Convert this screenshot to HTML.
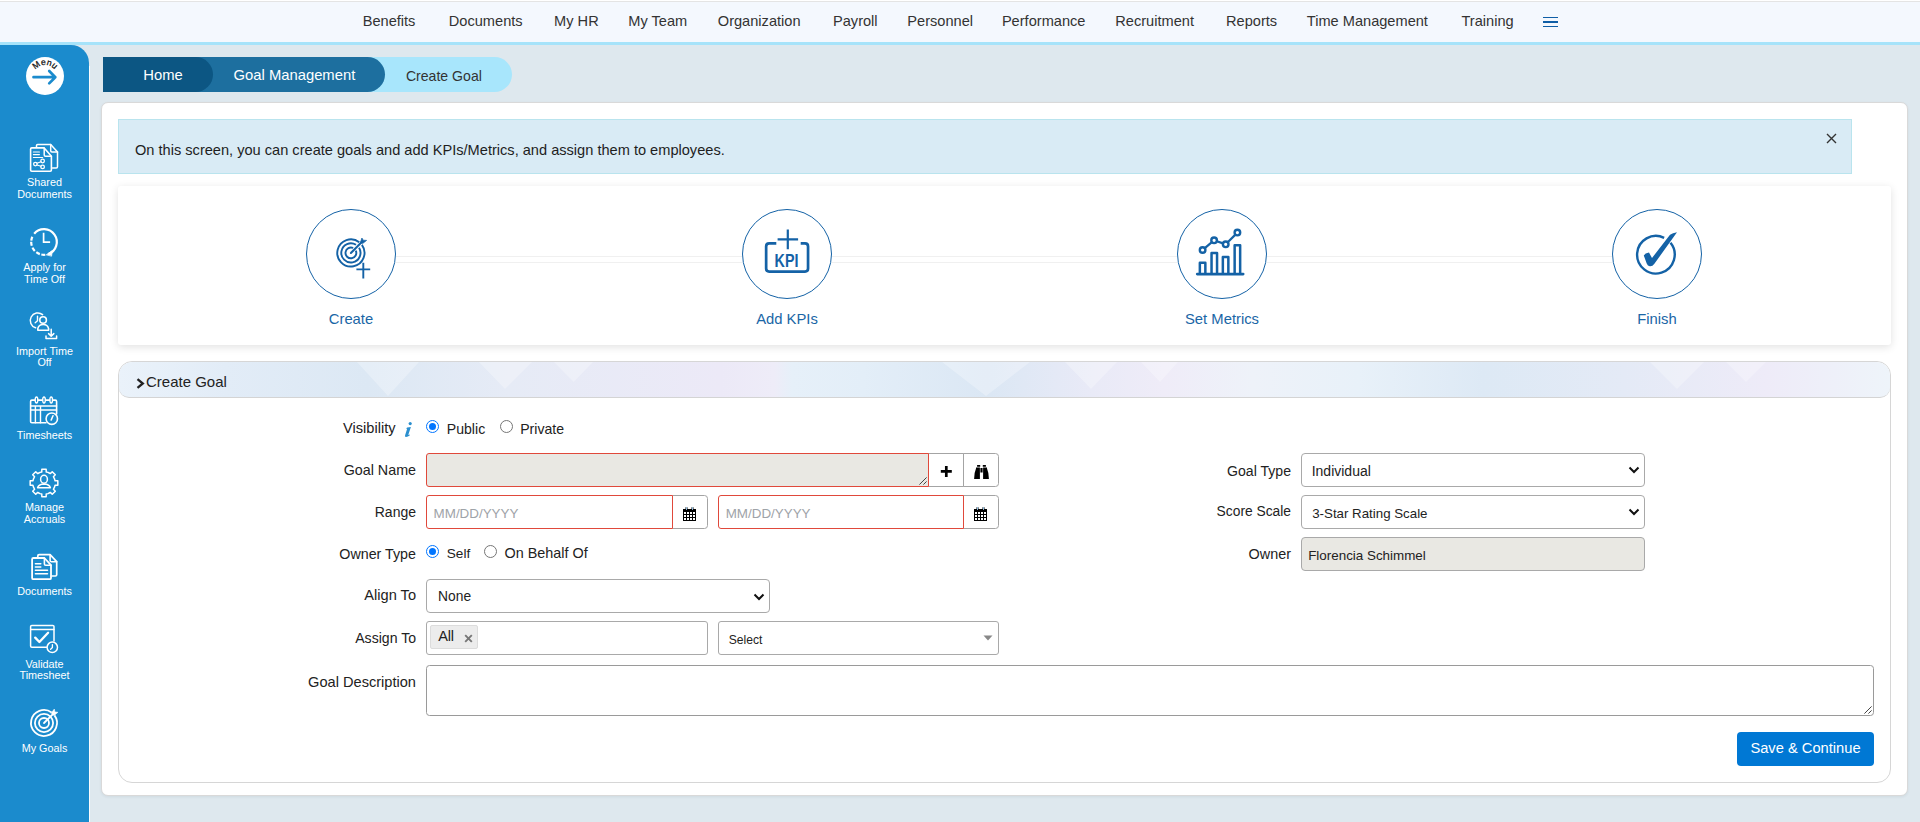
<!DOCTYPE html>
<html><head><meta charset="utf-8">
<style>
*{box-sizing:border-box;margin:0;padding:0}
html,body{width:1920px;height:822px;overflow:hidden;background:#dee8ee;font-family:"Liberation Sans",sans-serif;color:#222;position:relative}
.t{position:absolute;line-height:1;white-space:nowrap}
.b{position:absolute}
#top{position:absolute;left:0;top:0;width:1920px;height:45px;background:#f4f8fe}
#top:before{content:"";position:absolute;left:0;top:1px;width:1920px;height:1px;background:#e4e4e4}
#top:after{content:"";position:absolute;left:0;top:42px;width:1920px;height:3px;background:#a6e3fa}
#side{position:absolute;left:0;top:45px;width:89px;height:777px;background:#1b8bcd;border-top-right-radius:18px}
#sideline{position:absolute;left:89px;top:66px;width:1px;height:756px;background:#fafcfd}
.sl{position:absolute;left:0;width:89px;text-align:center;color:#fff;font-size:10.8px;line-height:11.7px}
.si{position:absolute;left:30px;width:29px;height:29px;overflow:visible}
.bcs{position:absolute;top:57px;height:35px;left:103px;border-radius:0 17.5px 17.5px 0}
#card{position:absolute;left:101px;top:102px;width:1807px;height:694px;background:#fff;border:1px solid #d9d9d9;border-radius:7px;box-shadow:0 1px 3px rgba(0,40,60,.07)}
#banner{position:absolute;left:118px;top:119px;width:1734px;height:55px;background:#d9ebf5;border:1px solid #b9e4ee}
#steps{position:absolute;left:118px;top:186px;width:1773px;height:159px;background:#fff;border-radius:3px;box-shadow:0 2px 8px rgba(0,0,0,.12)}
.circ{position:absolute;top:209px;width:90px;height:90px;border:1.4px solid #1462a6;border-radius:50%;background:#fff}
.circ svg{position:absolute;left:0;top:0}
.conn{position:absolute;top:256px;height:7px;border-top:1px solid #f0f0f0;border-bottom:1px solid #f0f0f0}
#sec{position:absolute;left:118px;top:361px;width:1773px;height:422px;border:1px solid #d6d6d6;border-radius:14px;background:#fff;overflow:hidden}
#sechead{position:absolute;left:0;top:0;width:1771px;height:36px;border-bottom:1px solid #d4d4d4;border-radius:13px 13px 10px 10px;overflow:hidden;background:linear-gradient(90deg,#eaf2fa 0%,#e2ecf7 6%,#dce8f4 14%,#e6ebf6 22%,#ece9f7 34%,#eeecf8 37%,#e6f0f9 38%,#e3eef8 42%,#dbe7f4 49%,#e9eaf7 55%,#efecf8 59%,#eef2f9 64%,#e8f1f9 70%,#dde9f5 77%,#e4eaf6 85%,#eeebf8 93%,#eef4fa 100%)}
.inp{position:absolute;border:1px solid #b3b3b3;background:#fff}
.red{border-color:#e0493b}
.dis{background:#e9e8e3}
.sel{position:absolute;border:1px solid #a9a9a9;border-radius:4px;background:#fff}
.radio{position:absolute;width:13px;height:13px;border-radius:50%;border:1px solid #767676;background:#fff}
.radio.on{border:1px solid #0075ff}
.radio.on:after{content:"";position:absolute;left:2px;top:2px;width:7px;height:7px;border-radius:50%;background:#0075ff}
</style></head><body>
<div id="top"></div><div class="b" style="left:0;top:0;width:1920px;height:1px;background:#fff"></div>
<div class="t" style="top:13.64px;font-size:14.6px;left:362.70px;color:#333;">Benefits</div>
<div class="t" style="top:13.64px;font-size:14.6px;left:448.80px;color:#333;">Documents</div>
<div class="t" style="top:13.64px;font-size:14.6px;left:554.10px;color:#333;">My HR</div>
<div class="t" style="top:13.64px;font-size:14.6px;left:628.30px;color:#333;">My Team</div>
<div class="t" style="top:13.64px;font-size:14.6px;left:717.80px;color:#333;">Organization</div>
<div class="t" style="top:13.64px;font-size:14.6px;left:833.00px;color:#333;">Payroll</div>
<div class="t" style="top:13.64px;font-size:14.6px;left:907.30px;color:#333;">Personnel</div>
<div class="t" style="top:13.64px;font-size:14.6px;left:1001.90px;color:#333;">Performance</div>
<div class="t" style="top:13.64px;font-size:14.6px;left:1115.30px;color:#333;">Recruitment</div>
<div class="t" style="top:13.64px;font-size:14.6px;left:1226.00px;color:#333;">Reports</div>
<div class="t" style="top:13.64px;font-size:14.6px;left:1306.80px;color:#333;">Time Management</div>
<div class="t" style="top:13.64px;font-size:14.6px;left:1461.50px;color:#333;">Training</div>
<div class="b" style="left:1543px;top:16.5px;width:15px;height:1.7px;background:#0f5ea6"></div>
<div class="b" style="left:1543px;top:21.1px;width:15px;height:1.7px;background:#0f5ea6"></div>
<div class="b" style="left:1543px;top:25.65px;width:15px;height:1.7px;background:#0f5ea6"></div>
<div id="side"></div><div id="sideline"></div>
<svg class="b" style="left:25px;top:56px" width="40" height="40" viewBox="0 0 40 40">
<defs><path id="marc" d="M8,21 A12,12 0 0 1 32,21"/></defs>
<circle cx="20" cy="20" r="19" fill="#fff"/>
<text font-family="Liberation Sans" font-size="8.6" fill="#111" stroke="#111" stroke-width="0.25" letter-spacing="0.2"><textPath href="#marc" startOffset="50%" text-anchor="middle">Menu</textPath></text>
<path d="M8.5,21.2 H30.3 M24.2,15 L30.3,21.2 L24.2,27.4" stroke="#1b8bcd" stroke-width="2.7" fill="none" stroke-linecap="round" stroke-linejoin="round"/>
</svg>
<div class="sl" style="top:177.41px">Shared<br>Documents</div>
<div class="sl" style="top:262.01px">Apply for<br>Time Off</div>
<div class="sl" style="top:345.51px">Import Time<br>Off</div>
<div class="sl" style="top:430.01px">Timesheets</div>
<div class="sl" style="top:502.31px">Manage<br>Accruals</div>
<div class="sl" style="top:586.11px">Documents</div>
<div class="sl" style="top:658.51px">Validate<br>Timesheet</div>
<div class="sl" style="top:742.61px">My Goals</div>
<svg class="b" style="left:26px;top:140px" width="36" height="36" viewBox="0 0 36 36" fill="none" stroke="#fff" stroke-linecap="round" stroke-linejoin="round"><path d="M10.5,7 V5.6 Q10.5,4.4 11.7,4.4 H24.7 L31.5,12 V26.8 Q31.5,28 30.3,28 H26.5" stroke-width="1.5"/>
<path d="M24.7,4.4 V10.8 Q24.7,12 25.9,12 H31.5" stroke-width="1.5"/>
<path d="M5.8,7.9 H18.2 L25.4,16.3 V30.1 Q25.4,31.3 24.2,31.3 H5.8 Q4.6,31.3 4.6,30.1 V9.1 Q4.6,7.9 5.8,7.9 Z" stroke-width="1.6" fill="#1b8bcd"/>
<path d="M18.2,7.9 V15.1 Q18.2,16.3 19.4,16.3 H25.4" stroke-width="1.5"/>
<path d="M7.4,12 H13.4 M7.4,14.6 H13.4 M7.4,17.5 H16.6" stroke-width="1.2"/>
<circle cx="9.4" cy="24.1" r="1.8" stroke-width="1.3"/><circle cx="16.6" cy="21" r="1.8" stroke-width="1.3"/><circle cx="16.6" cy="26.9" r="1.8" stroke-width="1.3"/>
<path d="M11,23.2 L15,21.8 M11,25 L15,26.2" stroke-width="1.2"/></svg>
<svg class="b" style="left:26px;top:224px" width="36" height="36" viewBox="0 0 36 36" fill="none" stroke="#fff" stroke-linecap="round" stroke-linejoin="round"><path d="M8.19,9.77 A12.8,12.8 0 1 1 22.38,30.03" stroke-width="2.2" stroke-linecap="butt"/>
<path d="M5.27,16.66 A12.8,12.8 0 0 1 6.31,12.79 M5.76,21.74 A12.8,12.8 0 0 1 5.20,17.78 M8.79,26.89 A12.8,12.8 0 0 1 6.50,23.61 M13.83,30.10 A12.8,12.8 0 0 1 10.30,28.22 M19.34,30.73 A12.8,12.8 0 0 1 15.34,30.52" stroke-width="2.2" stroke-linecap="butt"/>
<path d="M20.6,30.6 L26.3,26.6 L25.6,31.8 Z" fill="#fff" stroke-width="0.8"/>
<path d="M17.6,8.8 V18.1 H24.1" stroke-width="1.7" stroke-linecap="butt" stroke-linejoin="miter"/></svg>
<svg class="b" style="left:26px;top:308px" width="36" height="36" viewBox="0 0 36 36" fill="none" stroke="#fff" stroke-linecap="round" stroke-linejoin="round"><path d="M16.6,6.6 A7.6,7.6 0 1 0 9.6,19.8" stroke-width="1.5"/>
<path d="M11.5,8.3 V12.8 L9.2,14.8" stroke-width="1.4"/>
<circle cx="17.1" cy="12" r="3.3" stroke-width="1.6"/>
<path d="M11.8,22.3 V20.6 A5.5,5 0 0 1 22.6,20.6 V22.3 Z" stroke-width="1.6"/>
<path d="M25.2,21.2 V28 M22.6,25.6 L25.2,28.2 L27.8,25.6" stroke-width="1.5"/>
<path d="M20,28 V30.6 H30.6 V28" stroke-width="1.5"/></svg>
<svg class="b" style="left:26px;top:392px" width="36" height="36" viewBox="0 0 36 36" fill="none" stroke="#fff" stroke-linecap="round" stroke-linejoin="round"><path d="M30.6,22 V9.4 Q30.6,8.1 29.3,8.1 H5.9 Q4.6,8.1 4.6,9.4 V29.4 Q4.6,30.7 5.9,30.7 H20" stroke-width="1.6"/>
<path d="M4.6,14 H30.6 M4.6,18 H30.6 M9.4,14 V30.7 M14.5,14 V30.7" stroke-width="1.4"/>
<ellipse cx="10.5" cy="8" rx="1.3" ry="3" fill="#1b8bcd" stroke-width="1.4"/>
<ellipse cx="18" cy="8" rx="1.3" ry="3" fill="#1b8bcd" stroke-width="1.4"/>
<ellipse cx="25.2" cy="8" rx="1.3" ry="3" fill="#1b8bcd" stroke-width="1.4"/>
<circle cx="25.8" cy="26.7" r="5.7" fill="#1b8bcd" stroke-width="1.6"/>
<path d="M27,23.8 L25.2,28" stroke-width="1.6"/></svg>
<svg class="b" style="left:26px;top:465px" width="36" height="36" viewBox="0 0 36 36" fill="none" stroke="#fff" stroke-linecap="round" stroke-linejoin="round"><path d="M14.09,7.40 L15.78,6.92 L15.83,4.17 L20.17,4.17 L20.22,6.92 L21.91,7.40 L22.73,7.74 L24.26,8.59 L26.25,6.69 L29.31,9.75 L27.41,11.74 L28.26,13.27 L28.60,14.09 L29.08,15.78 L31.83,15.83 L31.83,20.17 L29.08,20.22 L28.60,21.91 L28.26,22.73 L27.41,24.26 L29.31,26.25 L26.25,29.31 L24.26,27.41 L22.73,28.26 L21.91,28.60 L20.22,29.08 L20.17,31.83 L15.83,31.83 L15.78,29.08 L14.09,28.60 L13.27,28.26 L11.74,27.41 L9.75,29.31 L6.69,26.25 L8.59,24.26 L7.74,22.73 L7.40,21.91 L6.92,20.22 L4.17,20.17 L4.17,15.83 L6.92,15.78 L7.40,14.09 L7.74,13.27 L8.59,11.74 L6.69,9.75 L9.75,6.69 L11.74,8.59 L13.27,7.74 Z" stroke-width="1.5"/>
<ellipse cx="18" cy="14.3" rx="3.4" ry="4" stroke-width="1.5"/>
<path d="M11.6,22.8 Q12.5,19.2 18,19 Q23.5,19.2 24.4,22.8 Z" stroke-width="1.5"/></svg>
<svg class="b" style="left:26px;top:549px" width="36" height="36" viewBox="0 0 36 36" fill="none" stroke="#fff" stroke-linecap="round" stroke-linejoin="round"><path d="M11.8,8 V7 Q11.8,5.7 13.1,5.7 H24.1 L30.7,12.7 V25.7 Q30.7,27 29.4,27 H26" stroke-width="1.7"/>
<path d="M24.1,5.7 V11.4 Q24.1,12.7 25.4,12.7 H30.7" stroke-width="1.6"/>
<path d="M7.4,9 H18.4 L25,16.2 V28.9 Q25,30.2 23.7,30.2 H7.4 Q6.1,30.2 6.1,28.9 V10.3 Q6.1,9 7.4,9 Z" stroke-width="1.8" fill="#1b8bcd"/>
<path d="M18.4,9 V14.9 Q18.4,16.2 19.7,16.2 H25" stroke-width="1.6"/>
<path d="M9.4,14.7 H14.8 M9.4,18 H14.8 M9.4,21.3 H21.5 M9.4,24.7 H21.5" stroke-width="1.5"/></svg>
<svg class="b" style="left:26px;top:621px" width="36" height="36" viewBox="0 0 36 36" fill="none" stroke="#fff" stroke-linecap="round" stroke-linejoin="round"><path d="M20.5,26.3 H5.8 Q4.6,26.3 4.6,25.1 V5.6 Q4.6,4.4 5.8,4.4 H26.8 Q28,4.4 28,5.6 V20" stroke-width="1.5"/>
<path d="M4.6,8.5 H28" stroke-width="1.4"/>
<path d="M9.2,16.6 L13.4,21 L22.1,11.8" stroke-width="2.3"/>
<circle cx="26.3" cy="26.3" r="5.2" fill="#1b8bcd" stroke-width="1.5"/>
<path d="M26.4,23.6 V26.6 L24.6,28.2" stroke-width="1.3"/></svg>
<svg class="b" style="left:26px;top:705px" width="36" height="36" viewBox="0 0 36 36" fill="none" stroke="#fff" stroke-linecap="round" stroke-linejoin="round"><path d="M28.52,10.36 A13,13 0 1 1 25.64,7.48" stroke-width="1.8" stroke-linecap="butt"/>
<circle cx="18" cy="18" r="9.1" stroke-width="1.8"/>
<circle cx="18" cy="18" r="5.0" stroke-width="1.8"/>
<path d="M18,18 L27.2,8.8" stroke-width="1.8"/>
<path d="M25.3,7.9 L28.3,4.1 L28.9,7.0 L31.9,7.3 L28.1,10.5 L26.6,9.8 Z" fill="#fff" stroke-width="0.6"/></svg>
<div class="bcs" style="width:409px;background:#a8e6fc"></div>
<div class="bcs" style="width:282px;background:#1d6f9f"></div>
<div class="bcs" style="width:110px;background:#0c5683"></div>
<div class="t" style="top:68.47px;font-size:14.8px;left:-37.00px;width:400px;text-align:center;color:#fff;">Home</div>
<div class="t" style="top:68.47px;font-size:14.8px;left:94.40px;width:400px;text-align:center;color:#fff;">Goal Management</div>
<div class="t" style="top:68.56px;font-size:14.1px;left:243.90px;width:400px;text-align:center;color:#333;">Create Goal</div>
<div id="card"></div>
<div id="banner"></div>
<div class="t" style="top:143.14px;font-size:14.6px;left:135.00px;color:#1e1e1e;">On this screen, you can create goals and add KPIs/Metrics, and assign them to employees.</div>
<svg class="b" style="left:1826px;top:133px" width="11" height="11" viewBox="0 0 11 11"><path d="M1,1 L10,10 M10,1 L1,10" stroke="#333" stroke-width="1.4"/></svg>
<div id="steps"></div>
<div class="conn" style="left:396px;width:346px"></div>
<div class="conn" style="left:832px;width:345px"></div>
<div class="conn" style="left:1267px;width:345px"></div>
<div class="circ" style="left:306px"><svg width="90" height="90" viewBox="0 0 90 90" fill="none" stroke="#1462a6" stroke-linecap="round" stroke-linejoin="round"><g transform="translate(-1.4,-1.4)">
<path d="M56.30,36.31 A13.6,13.6 0 1 1 53.67,33.58 M53.44,39.21 A9.6,9.6 0 1 1 50.39,36.16" stroke-width="1.9" stroke-linecap="butt"/>
<path d="M50.19,42.02 A5.4,5.4 0 1 1 47.58,39.41" stroke-width="1.9" stroke-linecap="butt"/>
<path d="M45.3,44.3 L56.2,33.4" stroke-width="2.1"/>
<path d="M55,33.4 L56.3,29.4 L57.6,31.6 L61,31.8 L57,35 Z" fill="#1462a6" stroke-width="0.7"/>
<path d="M57.7,54.2 V70 M50.8,60.8 H64.6" stroke-width="1.9" stroke-linecap="butt"/>
</g></svg></div>
<div class="circ" style="left:742px"><svg width="90" height="90" viewBox="0 0 90 90" fill="none" stroke="#1462a6" stroke-linecap="round" stroke-linejoin="round"><g transform="translate(-1.4,-1.4)">
<path d="M34.7,34.75 H27.6 Q24.55,34.75 24.55,37.8 V59.9 Q24.55,62.95 27.6,62.95 H63.4 Q66.45,62.95 66.45,59.9 V37.8 Q66.45,34.75 63.4,34.75 H59.1" stroke-width="2.7" stroke-linecap="butt"/>
<path d="M46.2,21 V40.7 M36,30.8 H56.5" stroke-width="2.2" stroke-linecap="butt"/>
<text x="44.9" y="58.4" text-anchor="middle" font-family="Liberation Sans" font-weight="bold" font-size="19" fill="#1462a6" stroke="none" textLength="23.8" lengthAdjust="spacingAndGlyphs">KPI</text>
</g></svg></div>
<div class="circ" style="left:1177px"><svg width="90" height="90" viewBox="0 0 90 90" fill="none" stroke="#1462a6" stroke-linecap="round" stroke-linejoin="round"><g transform="translate(-1.4,-1.4)">
<path d="M20.6,65.5 H66.6" stroke-width="2.6" stroke-linecap="round"/>
<path d="M23.25,65 V54.05 H28.75 V65 M34.95,65 V44.35 H40.45 V65 M46.25,65 V48.35 H51.75 V65 M58.05,65 V36.65 H63.55 V65" stroke-width="2.5" stroke-linecap="butt" stroke-linejoin="round"/>
<circle cx="26" cy="41.4" r="2.8" stroke-width="2.4"/>
<circle cx="37.5" cy="31.7" r="2.8" stroke-width="2.4"/>
<circle cx="49.1" cy="35.7" r="2.8" stroke-width="2.4"/>
<circle cx="60.8" cy="24" r="2.8" stroke-width="2.4"/>
<path d="M28.2,39.6 L35.3,33.5 M40.2,32.6 L46.4,34.8 M51.1,33.7 L58.8,26" stroke-width="2.2" stroke-linecap="butt"/>
</g></svg></div>
<div class="circ" style="left:1612px"><svg width="90" height="90" viewBox="0 0 90 90" fill="none" stroke="#1462a6" stroke-linecap="round" stroke-linejoin="round"><g transform="translate(-1.4,-1.4)">
<path d="M58.91,34.27 A18.8,18.8 0 1 1 52.54,29.20" stroke-width="2.4" stroke-linecap="butt"/>
<path d="M32.2,46.8 Q33.4,44.6 37.4,44 L40.4,49.4 L58.4,26.2 Q61,24.1 65.4,23.6 L42.8,55.2 Q40.8,58 38.2,57.7 Q36,57.2 35.1,54.8 Z" fill="#1462a6" stroke="none"/>
</g></svg></div>
<div class="t" style="top:312.47px;font-size:14.8px;left:151.00px;width:400px;text-align:center;color:#1a66a6;">Create</div>
<div class="t" style="top:312.47px;font-size:14.8px;left:587.00px;width:400px;text-align:center;color:#1a66a6;">Add KPIs</div>
<div class="t" style="top:312.47px;font-size:14.8px;left:1022.00px;width:400px;text-align:center;color:#1a66a6;">Set Metrics</div>
<div class="t" style="top:312.47px;font-size:14.8px;left:1457.00px;width:400px;text-align:center;color:#1a66a6;">Finish</div>
<div id="sec"><div id="sechead"><svg width="1771" height="36" style="position:absolute;left:0;top:0" fill="#fff" fill-opacity="0.28"><polygon points="360,0 413,0 386,27" /><polygon points="435,0 474,0 454.70000000000005,20" /><polygon points="823,0 911,0 867,34" /><polygon points="946,0 998,0 972,27" /><polygon points="1022,0 1059,0 1041,20" /><polygon points="1531,0 1585,0 1558,27" /><polygon points="1607,0 1647,0 1627,20" /><polygon points="238,0 300,0 269,34" /></svg></div></div>
<svg class="b" style="left:136px;top:377.5px" width="9" height="11" viewBox="0 0 9 11"><path d="M1.5,1.2 L6.8,5.5 L1.5,9.8" stroke="#222" stroke-width="2.3" fill="none"/></svg>
<div class="t" style="top:374.00px;font-size:15px;left:146.00px;color:#222;">Create Goal</div>
<div class="t" style="top:421.34px;font-size:14.6px;right:1524.50px;color:#222;">Visibility</div>
<div class="t" style="top:462.70px;font-size:14.3px;right:1504.00px;color:#222;">Goal Name</div>
<div class="t" style="top:504.85px;font-size:14.0px;right:1504.00px;color:#222;">Range</div>
<div class="t" style="top:546.51px;font-size:14.28px;right:1504.00px;color:#222;">Owner Type</div>
<div class="t" style="top:588.34px;font-size:14.6px;right:1504.00px;color:#222;">Align To</div>
<div class="t" style="top:631.17px;font-size:14.09px;right:1504.00px;color:#222;">Assign To</div>
<div class="t" style="top:674.64px;font-size:14.6px;right:1504.00px;color:#222;">Goal Description</div>
<div class="t" style="top:463.58px;font-size:14.08px;right:629.00px;color:#222;">Goal Type</div>
<div class="t" style="top:505.42px;font-size:13.8px;right:629.00px;color:#222;">Score Scale</div>
<div class="t" style="top:547.01px;font-size:14.4px;right:629.00px;color:#222;">Owner</div>
<svg class="b" style="left:402px;top:421px" width="12" height="17" viewBox="0 0 12 17"><circle cx="8.2" cy="2.6" r="1.6" fill="#2b8fcf"/><path d="M5.2,6.4 L8.9,6 L6.4,13.6 Q6.3,14.4 7.6,13.6 L7.9,14.3 Q5.6,16.1 3.7,15.9 Q2.6,15.6 3.1,14.2 L5,8.2 Q5.1,7.4 4,7.6 Z" fill="#2b8fcf"/></svg>
<div class="radio on" style="left:425.7px;top:420.2px"></div>
<div class="radio" style="left:499.5px;top:420.2px"></div>
<div class="radio on" style="left:425.7px;top:545.3px"></div>
<div class="radio" style="left:483.5px;top:545.3px"></div>
<div class="t" style="top:421.76px;font-size:14.1px;left:446.80px;color:#222;">Public</div>
<div class="t" style="top:421.76px;font-size:14.1px;left:520.20px;color:#222;">Private</div>
<div class="t" style="top:547.09px;font-size:13.6px;left:446.80px;color:#222;">Self</div>
<div class="t" style="top:546.41px;font-size:14.4px;left:504.50px;color:#222;">On Behalf Of</div>
<div class="inp" style="left:928.0px;top:453.0px;width:36.0px;height:34.0px;border-color:#a4a4a4"></div>
<div class="inp" style="left:963.0px;top:453.0px;width:36.0px;height:34.0px;border-color:#a4a4a4;border-radius:0 3.5px 3.5px 0"></div>
<div class="inp red dis" style="left:426.0px;top:453.0px;width:503.0px;height:34.0px;border-radius:3px 0 0 3px"></div>
<svg class="b" style="left:917px;top:475px" width="11" height="11" viewBox="0 0 11 11"><path d="M2.4,9.6 L9.6,2.4 M6.4,9.6 L9.6,6.4" stroke="#444" stroke-width="1"/></svg>
<svg class="b" style="left:940px;top:465px" width="13" height="13" viewBox="0 0 13 13"><path d="M6.3,1 V12 M0.8,6.3 H11.8" stroke="#000" stroke-width="2.7"/></svg>
<svg class="b" style="left:973px;top:464px" width="17" height="16" viewBox="0 0 17 16"><path d="M4.1,1 H7.2 V2.8 H4.1 Z M9.8,1 H12.9 V2.8 H9.8 Z M3,3.6 H6.9 V15 H1.1 Q1.1,9 3,4.6 Z M7.4,4 H9.6 V8.6 H7.4 Z M10.1,3.6 H14 V4.6 Q15.9,9 15.9,15 H10.1 Z" fill="#000"/></svg>
<div class="inp" style="left:672.0px;top:495.0px;width:36.0px;height:34.0px;border-color:#a4a4a4;border-radius:0 3.5px 3.5px 0"></div>
<div class="inp red" style="left:426.0px;top:495.0px;width:247.0px;height:34.0px;border-radius:3px 0 0 3px"></div>
<div class="inp" style="left:963.0px;top:495.0px;width:36.0px;height:34.0px;border-color:#a4a4a4;border-radius:0 3.5px 3.5px 0"></div>
<div class="inp red" style="left:718.0px;top:495.0px;width:246.0px;height:34.0px;border-radius:3px 0 0 3px"></div>
<div class="t" style="top:506.66px;font-size:13.4px;left:433.60px;color:#9ea3a8;">MM/DD/YYYY</div>
<div class="t" style="top:506.66px;font-size:13.4px;left:725.70px;color:#9ea3a8;">MM/DD/YYYY</div>
<svg class="b" style="left:683px;top:507px" width="13" height="14" viewBox="0 0 13 14"><path d="M2.5,0.3 H4.5 V2 H8.5 V0.3 H10.5 V2 H13 V14 H0 V2 H2.5 Z" fill="#000"/>
<g fill="#fff"><rect x="1" y="5" width="2" height="2"/><rect x="4" y="5" width="2" height="2"/><rect x="7" y="5" width="2" height="2"/><rect x="10" y="5" width="2" height="2"/>
<rect x="1" y="8" width="2" height="2"/><rect x="4" y="8" width="2" height="2"/><rect x="7" y="8" width="2" height="2"/><rect x="10" y="8" width="2" height="2"/>
<rect x="1" y="11" width="2" height="2"/><rect x="4" y="11" width="2" height="2"/><rect x="7" y="11" width="2" height="2"/><rect x="10" y="11" width="2" height="2"/></g>
<rect x="3" y="0" width="1" height="3" fill="#8fb8d8"/><rect x="9" y="0" width="1" height="3" fill="#8fb8d8"/></svg>
<svg class="b" style="left:974px;top:507px" width="13" height="14" viewBox="0 0 13 14"><path d="M2.5,0.3 H4.5 V2 H8.5 V0.3 H10.5 V2 H13 V14 H0 V2 H2.5 Z" fill="#000"/>
<g fill="#fff"><rect x="1" y="5" width="2" height="2"/><rect x="4" y="5" width="2" height="2"/><rect x="7" y="5" width="2" height="2"/><rect x="10" y="5" width="2" height="2"/>
<rect x="1" y="8" width="2" height="2"/><rect x="4" y="8" width="2" height="2"/><rect x="7" y="8" width="2" height="2"/><rect x="10" y="8" width="2" height="2"/>
<rect x="1" y="11" width="2" height="2"/><rect x="4" y="11" width="2" height="2"/><rect x="7" y="11" width="2" height="2"/><rect x="10" y="11" width="2" height="2"/></g>
<rect x="3" y="0" width="1" height="3" fill="#8fb8d8"/><rect x="9" y="0" width="1" height="3" fill="#8fb8d8"/></svg>
<div class="sel" style="left:1301.0px;top:453.0px;width:344.0px;height:34.0px;"></div>
<div class="t" style="top:464.35px;font-size:14.0px;left:1311.70px;color:#222;">Individual</div>
<svg class="b" style="left:1628.3px;top:466px" width="12" height="8" viewBox="0 0 12 8"><path d="M1.5,1.5 L6,6 L10.5,1.5" stroke="#111" stroke-width="2" fill="none"/></svg>
<div class="sel" style="left:1301.0px;top:495.0px;width:344.0px;height:34.0px;"></div>
<div class="t" style="top:506.54px;font-size:13.3px;left:1312.20px;color:#222;">3-Star Rating Scale</div>
<svg class="b" style="left:1628.3px;top:508px" width="12" height="8" viewBox="0 0 12 8"><path d="M1.5,1.5 L6,6 L10.5,1.5" stroke="#111" stroke-width="2" fill="none"/></svg>
<div class="sel" style="left:1301.0px;top:537.0px;width:344.0px;height:34.0px;background:#e9e8e3;border-color:#a9a9a9"></div>
<div class="t" style="top:548.66px;font-size:13.4px;left:1308.20px;color:#222;">Florencia Schimmel</div>
<div class="sel" style="left:426.0px;top:579.0px;width:344.0px;height:34.0px;"></div>
<div class="t" style="top:590.22px;font-size:13.8px;left:438.10px;color:#222;">None</div>
<svg class="b" style="left:753.4px;top:593px" width="12" height="8" viewBox="0 0 12 8"><path d="M1.5,1.5 L6,6 L10.5,1.5" stroke="#111" stroke-width="2" fill="none"/></svg>
<div class="sel" style="left:426.0px;top:621.0px;width:282.0px;height:34.0px;border-color:#a9a9a9;border-radius:3px"></div>
<div class="b" style="left:430px;top:625px;width:47.5px;height:23.7px;background:#ececec;border:1px solid #dcdcdc;border-radius:2px"></div>
<div class="t" style="top:629.44px;font-size:14.6px;left:438.30px;color:#222;letter-spacing:-0.3px;">All</div>
<svg class="b" style="left:463.5px;top:633.5px" width="9" height="9" viewBox="0 0 9 9"><path d="M1.2,1.2 L7.8,7.8 M7.8,1.2 L1.2,7.8" stroke="#777" stroke-width="1.9"/></svg>
<div class="sel" style="left:718.0px;top:621.0px;width:281.0px;height:34.0px;border-color:#a9a9a9;border-radius:3px"></div>
<div class="t" style="top:633.66px;font-size:12.1px;left:728.70px;color:#222;">Select</div>
<svg class="b" style="left:983px;top:635px" width="10" height="6" viewBox="0 0 10 6"><path d="M0.5,0.5 H9.5 L5,5.5 Z" fill="#888"/></svg>
<div class="sel" style="left:426.0px;top:665.0px;width:1448.0px;height:51.0px;border-color:#9a9a9a;border-radius:3.5px"></div>
<svg class="b" style="left:1862px;top:704px" width="11" height="11" viewBox="0 0 11 11"><path d="M2.4,9.6 L9.6,2.4 M6.4,9.6 L9.6,6.4" stroke="#444" stroke-width="1"/></svg>
<div class="b" style="left:1737px;top:732px;width:137px;height:34px;background:#0078d4;border-radius:4px"></div>
<div class="t" style="top:741.36px;font-size:14.7px;left:1605.50px;width:400px;text-align:center;color:#fff;">Save &amp; Continue</div>
</body></html>
